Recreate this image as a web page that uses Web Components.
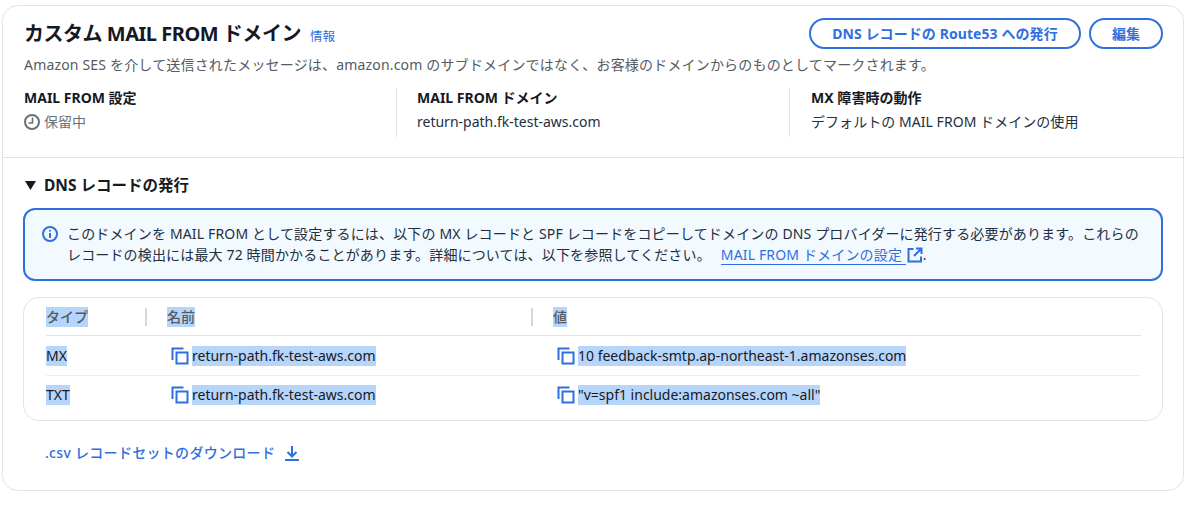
<!DOCTYPE html>
<html lang="ja"><head><meta charset="utf-8"><style>
html,body{margin:0;background:#fff}
body{padding:5px 16px 15px 2px;font:14px/20px "Noto Sans","Noto Sans CJK JP",sans-serif;color:#16191f}
</style></head><body>
<mail-card>
  <span slot="title">カスタム MAIL FROM ドメイン</span>
  <x-btn slot="actions" style="width:272px">DNS レコードの Route53 への発行</x-btn>
  <x-btn slot="actions" style="width:74px">編集</x-btn>
  <span slot="desc">Amazon SES を介して送信されたメッセージは、amazon.com のサブドメインではなく、お客様のドメインからのものとしてマークされます。</span>
  <x-kv slot="kv" label="MAIL FROM 設定" pending>保留中</x-kv>
  <x-kv slot="kv" label="MAIL FROM ドメイン" divided>return-path.fk-test-aws.com</x-kv>
  <x-kv slot="kv" label="MX 障害時の動作" divided style="padding-left:21px;letter-spacing:.05px">デフォルトの MAIL FROM ドメインの使用</x-kv>
  <dns-section slot="body"></dns-section>
</mail-card>
<script>
const ICON_COPY='<svg width="18" height="18" viewBox="0 0 18 18" fill="none" stroke="#2f6fde" stroke-width="2"><path d="M12.5 1.5H1.5V13"/><rect x="5.5" y="5.5" width="11" height="11"/></svg>';
function def(name,html){customElements.define(name,class extends HTMLElement{connectedCallback(){if(this.shadowRoot)return;const r=this.attachShadow({mode:'open'});r.innerHTML=typeof html==='function'?html(this):html;}})}
def('mail-card',`<style>
:host{display:block;width:1180px;height:484px;border:1px solid #e3e3e3;border-radius:16px;overflow:hidden}
header{height:152px;box-sizing:border-box;padding:12px 20px 0 21px;border-bottom:1px solid #e3e3e3}
.top{display:flex;align-items:flex-start;height:31px}
h2{margin:0;font-size:20px;font-weight:700;line-height:31px;letter-spacing:-.48px}
.info{font-size:12.5px;color:#2f6fde;margin:3px 0 0 9px;line-height:31px}
.act{margin-left:auto;display:flex;gap:8px}
.desc{color:#545b64;line-height:20px;margin-top:6px;white-space:nowrap;letter-spacing:.18px}
.kv{display:grid;grid-template-columns:372px 393px 1fr;margin-top:13px}
</style>
<header><div class="top"><h2><slot name="title"></slot></h2><span class="info">情報</span><div class="act"><slot name="actions"></slot></div></div>
<div class="desc"><slot name="desc"></slot></div>
<div class="kv"><slot name="kv"></slot></div></header>
<slot name="body"></slot>`);
def('x-btn',`<style>
:host{display:flex;align-items:center;justify-content:center;height:31px;box-sizing:border-box;border:2px solid #2f6fde;border-radius:16px;color:#2f6fde;font-weight:700;font-size:14px;white-space:nowrap;background:#fff;letter-spacing:.08px}
</style><slot></slot>`);
def('x-kv',e=>`<style>
:host{display:block;height:49px;box-sizing:border-box;${e.hasAttribute('divided')?'border-left:1px solid #e3e3e3;padding-left:20px;':''}}
.l{font-weight:700;line-height:20px}
.v{margin-top:4px;line-height:20px;display:flex;align-items:center;gap:4px;white-space:nowrap;color:${e.hasAttribute('pending')?'#687078':'#232f3e'}}
svg{display:block}
</style><div class="l">${e.getAttribute('label')}</div><div class="v">${e.hasAttribute('pending')?'<svg width="16" height="16" viewBox="0 0 16 16" fill="none" stroke="#687078" stroke-width="2"><circle cx="8" cy="8" r="7"/><path d="M8.5 3.5V9H4.5" stroke-width="1.6"/></svg>':''}<slot></slot></div>`);
def('info-alert',`<style>
:host{display:flex;gap:9px;height:73px;box-sizing:border-box;border:2px solid #2f6fde;border-radius:12px;background:#f2f9ff;padding:13px 17px;color:#232f3e;line-height:21px;letter-spacing:.155px;white-space:nowrap}
.ic{flex:none;margin-top:3px}
</style><svg class="ic" width="16" height="16" viewBox="0 0 16 16" fill="none" stroke="#2f6fde" stroke-width="2"><circle cx="8" cy="8" r="7"/><path d="M8 7v5M8 4v1.6"/></svg><div><slot></slot></div>`);
def('x-sel',`<style>:host{display:inline-block;background:#b5d5fb;line-height:20px}</style><slot></slot>`);
def('x-copy',`<style>:host{display:flex;align-items:center;gap:3px;white-space:nowrap;padding-left:4px}svg{flex:none;display:block}</style>${ICON_COPY}<slot></slot>`);
def('dns-section',`<style>
:host{display:block;padding:16px 20px 0 20px}
.h{display:flex;align-items:center;gap:8px;font-weight:700;font-size:15.5px;height:22px;margin-left:2px}
.h svg{display:block}
.a{margin:12px 0 16px}
a{color:#2f6fde;text-decoration:none;border-bottom:1px solid #2f6fde;margin-left:10px}
.ext{vertical-align:-3px;margin-left:1px}
.tbl{border:1px solid #e3e3e3;border-radius:16px;height:124px;box-sizing:border-box;padding:0 21px 0 22px}
.row{display:grid;grid-template-columns:121px 386px 1fr;align-items:center}
.head{height:37px;border-bottom:1px solid #e3e3e3;color:#545b64;font-weight:500}
.head .c{display:flex;align-items:center;height:20px}
.head .c+.c{border-left:2px solid #d5d8dc;padding-left:20px;height:18px;margin-left:-22px}
.row.r{height:38px}
.row.r1{border-bottom:1px solid #eee;height:39px}
.r{color:#16191f}
.csv{display:flex;align-items:center;gap:10px;color:#2f6fde;font-weight:500;margin:22px 0 0 22px;height:20px;letter-spacing:.3px}
.csv svg{display:block;margin-left:-1px}
</style>
<div class="h"><svg width="11" height="9" viewBox="0 0 11 9"><path d="M0 0h11L5.5 9z" fill="#16191f"/></svg>DNS レコードの発行</div>
<div class="a"><info-alert>このドメインを MAIL FROM として設定するには、以下の MX レコードと SPF レコードをコピーしてドメインの DNS プロバイダーに発行する必要があります。これらの<br>レコードの検出には最大 72 時間かかることがあります。詳細については、以下を参照してください。<a>MAIL FROM ドメインの設定 </a><svg class="ext" width="16" height="16" viewBox="0 0 16 16" fill="none" stroke="#2f6fde" stroke-width="2"><path d="M6.5 2H1.5V14.5H14V9.5M9 1.5h5.5V7M14.5 1.5L7 9"/></svg>.</info-alert></div>
<div class="tbl">
<div class="row head"><div class="c"><x-sel>タイプ</x-sel></div><div class="c"><x-sel>名前</x-sel></div><div class="c"><x-sel>値</x-sel></div></div>
<div class="row r r1"><div><x-sel>MX</x-sel></div><x-copy><x-sel>return-path.fk-test-aws.com</x-sel></x-copy><x-copy><x-sel>10 feedback-smtp.ap-northeast-1.amazonses.com</x-sel></x-copy></div>
<div class="row r"><div><x-sel>TXT</x-sel></div><x-copy><x-sel>return-path.fk-test-aws.com</x-sel></x-copy><x-copy><x-sel>"v=spf1 include:amazonses.com ~all"</x-sel></x-copy></div>
</div>
<div class="csv"><span>.csv レコードセットのダウンロード</span><svg width="16" height="16" viewBox="0 0 16 16" fill="none" stroke="#2f6fde" stroke-width="2"><path d="M8 1v10M3.5 7L8 11.5 12.5 7M1 15h14"/></svg></div>`);
</script>
</body></html>
